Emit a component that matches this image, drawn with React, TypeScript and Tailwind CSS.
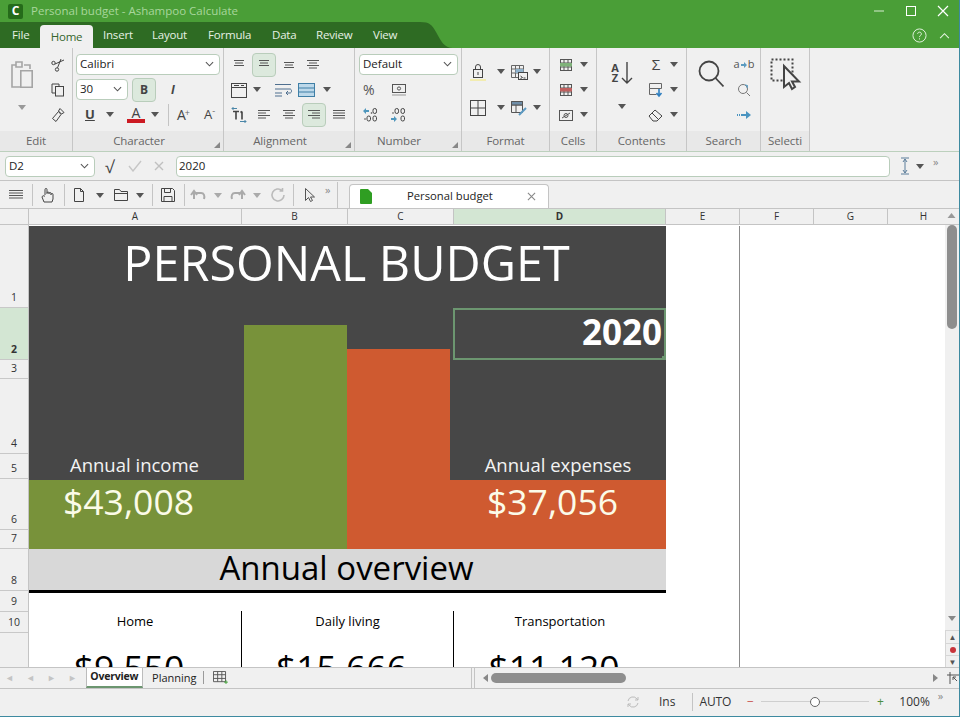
import React from "react";

const UI = "font-['Open_Sans',sans-serif]";

type IconProps = { className?: string; children: React.ReactNode; box?: number };

const Ico = ({ className = "w-4 h-4", children, box = 16 }: IconProps) => (
  <svg viewBox={`0 0 ${box} ${box}`} fill="none" stroke="currentColor" strokeWidth="1" className={`shrink-0 text-[#4a4a4a] ${className}`}>
    {children}
  </svg>
);

const Caret = ({ className = "" }: { className?: string }) => (
  <svg viewBox="0 0 8 5" className={`w-2 h-[5px] shrink-0 text-[#555] ${className}`} fill="currentColor">
    <path d="M0 0h8L4 5z" />
  </svg>
);

const Chevron = () => (
  <svg viewBox="0 0 10 6" className="w-[9px] h-[6px] shrink-0 text-[#555]" fill="none" stroke="currentColor" strokeWidth="1.2">
    <path d="M1 1l4 4 4-4" />
  </svg>
);

const Lines = ({ rows }: { rows: [number, number][] }) => (
  <Ico className="w-4 h-4 text-[#555]">
    {rows.map(([a, b], i) => (
      <path key={i} d={`M${a} ${3.5 + i * 2.5}H${b}`} />
    ))}
  </Ico>
);

const Combo = ({ label, className }: { label: string; className: string }) => (
  <div className={`flex items-center justify-between bg-white border border-[#b9cdbb] rounded-[4px] h-[21px] pl-[3px] pr-[5px] pb-px text-[11.5px] text-[#222] ${className}`}>
    <span>{label}</span>
    <Chevron />
  </div>
);

const Group = ({ label, className, corner, children }: { label: string; className: string; corner?: boolean; children: React.ReactNode }) => (
  <div className={`flex flex-col shrink-0 border-r border-[#c6c6c6] ${className}`}>
    <div className="flex h-[84px] pt-[4px]">{children}</div>
    <div className={`h-[20px] bg-[#e8e8e8] flex items-center justify-center text-[11.5px] tracking-[-0.1px] text-[#666] relative overflow-hidden whitespace-nowrap ${corner ? "pr-[18px]" : ""}`}>
      {label}
      {corner && (
        <svg viewBox="0 0 6 6" className="w-[6px] h-[6px] absolute right-[3px] bottom-[3px] text-[#888]" fill="currentColor">
          <path d="M6 0v6H0z" />
        </svg>
      )}
    </div>
  </div>
);

const Row = ({ className = "", children }: { className?: string; children: React.ReactNode }) => (
  <div className={`flex items-center h-[25px] ${className}`}>{children}</div>
);

const TableIcon = ({ band }: { band: string }) => (
  <svg viewBox="0 0 16 16" className="w-4 h-4 shrink-0" fill="none" stroke="#555">
    <rect x="2.5" y="2.5" width="11" height="11" />
    <path d="M2.5 6h11M2.5 10h11M6 2.5v11M10 2.5v11" />
    <rect x="2" y="6" width="12" height="3.5" fill={band} stroke="none" />
  </svg>
);

const Divider = () => <div className="w-px h-[22px] bg-[#c4c4c4] shrink-0" />;

const rows = [
  { n: "1", h: "h-[83px]" },
  { n: "2", h: "h-[52px]", active: true },
  { n: "3", h: "h-[19px]" },
  { n: "4", h: "h-[75px]" },
  { n: "5", h: "h-[25px]" },
  { n: "6", h: "h-[51px]" },
  { n: "7", h: "h-[19px]" },
  { n: "8", h: "h-[42px]" },
  { n: "9", h: "h-[21px]" },
  { n: "10", h: "h-[21px]" },
];

const cols = [
  { n: "A", w: "w-[213px]" },
  { n: "B", w: "w-[106px]" },
  { n: "C", w: "w-[106px]" },
  { n: "D", w: "w-[212px]", active: true },
  { n: "E", w: "w-[74px]" },
  { n: "F", w: "w-[74px]" },
  { n: "G", w: "w-[74px]" },
  { n: "H", w: "w-[57px] pl-[15px]" },
];

const categories = [
  { name: "Home", value: "$9,550", cls: "w-[213px] border-r border-black" },
  { name: "Daily living", value: "$15,666", cls: "w-[212px] border-r border-black" },
  { name: "Transportation", value: "$11,120", cls: "w-[212px]" },
];

const menu = [
  { label: "Insert", w: "w-[49px]" },
  { label: "Layout", w: "w-[56px]" },
  { label: "Formula", w: "w-[64px]" },
  { label: "Data", w: "w-[44px]" },
  { label: "Review", w: "w-[57px]" },
  { label: "View", w: "w-[40px]" },
];

export default function App() {
  return (
    <div className={`${UI} w-[960px] h-[717px] overflow-hidden flex flex-col bg-[#f0f0f0] border-r border-b border-[#3d8aa0]`}>
      {/* TITLE BAR */}
      <div className="h-[22px] bg-[#4a9e37] flex items-center pl-[8px] shrink-0">
        <div className="w-[15px] h-[15px] bg-[#256b1a] rounded-[2px] flex items-center justify-center text-white font-bold text-[12px] leading-none">C</div>
        <span className="ml-[8px] text-[11.5px] text-[#a8d69c]">Personal budget - Ashampoo Calculate</span>
        <div className="ml-auto flex items-center text-white">
          <svg viewBox="0 0 12 12" className="w-3 h-3 mr-[20px]" stroke="#d7ecd2" strokeWidth="1"><path d="M1 6h10" /></svg>
          <svg viewBox="0 0 12 12" className="w-3 h-3 mr-[20px]" stroke="#fff" fill="none"><rect x="1.5" y="1.5" width="9" height="9" /></svg>
          <svg viewBox="0 0 12 12" className="w-3 h-3 mr-[10px]" stroke="#fff" strokeWidth="1.2"><path d="M1 1l10 10M11 1L1 11" /></svg>
        </div>
      </div>

      {/* MENU TABS */}
      <div className="h-[26px] bg-[#4a9e37] flex shrink-0">
        <div className="w-[420px] bg-[#2e6b23] flex items-end text-[11.5px] tracking-[-0.2px] text-[#e6f1e3]">
          <span className="pl-[12px] w-[40px] mb-[5px]">File</span>
          <span className="w-[53px] h-[23px] bg-[#f0f0f0] rounded-t-[4px] text-[#35662c] flex items-center justify-center">Home</span>
          <span className="w-[10px]" />
          {menu.map((m) => (
            <span key={m.label} className={`${m.w} mb-[5px]`}>{m.label}</span>
          ))}
        </div>
        <svg viewBox="0 0 33 26" className="w-[33px] h-[26px]" fill="#2e6b23"><path d="M0 0C10 0 12 3 16 10c5 9 8 16 17 16H0z" /></svg>
        <div className="ml-auto flex items-center pr-[9px]">
          <svg viewBox="0 0 16 16" className="w-[15px] h-[15px] mr-[12px]" fill="none" stroke="#e8f5e4">
            <circle cx="8" cy="8" r="7" />
            <path d="M6 6.3C6 3.8 10 3.8 10 6.3 10 8 8 8 8 9.7M8 11v1.2" />
          </svg>
          <svg viewBox="0 0 12 8" className="w-[11px] h-[7px]" fill="none" stroke="#e8f5e4" strokeWidth="1.2"><path d="M1 7l5-5 5 5" /></svg>
        </div>
      </div>

      {/* RIBBON */}
      <div className="h-[104px] flex shrink-0 border-b border-[#bcd0bd]">
        <Group label="Edit" className="w-[73px]">
          <div className="w-[44px] flex flex-col items-center pt-[8px]">
            <svg viewBox="0 0 24 30" className="w-[24px] h-[30px]" fill="none" stroke="#a5a5a5" strokeWidth="1.6">
              <path d="M14 5h6v4M6 5H2v22h8" />
              <path d="M6 2h6v5H6z" />
              <path d="M10.8 10.8h11.4v16.4H10.8z" />
            </svg>
            <Caret className="mt-[15px] text-[#999]" />
          </div>
          <div className="w-[28px] flex flex-col items-center">
            <Row>
              <svg viewBox="0 0 16 16" className="w-4 h-4" fill="none" stroke="#444"><circle cx="3.5" cy="6" r="1.7" /><circle cx="7" cy="12.5" r="1.7" /><path d="M5 7l9-4M7.5 10.8L11 2" /></svg>
            </Row>
            <Row>
              <svg viewBox="0 0 14 14" className="w-[14px] h-[14px]" fill="none" stroke="#444"><path d="M8 3V1H1v9h3" /><rect x="4.5" y="3.5" width="8" height="9.5" /></svg>
            </Row>
            <Row>
              <svg viewBox="0 0 16 16" className="w-4 h-4" fill="none" stroke="#444"><path d="M10 1.5l4 4-2.5 1.5-3-3zM8.5 4.5l2.5 3-5 7-3.5-3z" /></svg>
            </Row>
          </div>
        </Group>

        <Group label="Character" corner className="w-[151px]">
          <div className="flex flex-col pl-[3px]">
            <Row><Combo label="Calibri" className="w-[144px]" /></Row>
            <Row className="gap-[4px]">
              <Combo label="30" className="w-[52px]" />
              <div className="w-[24px] h-[24px] bg-[#dce9dd] border border-[#b9cdbb] rounded-[4px] flex items-center justify-center font-bold text-[12px] text-[#444]">B</div>
              <span className="ml-[11px] italic font-bold text-[12px] text-[#444]">I</span>
            </Row>
            <Row className="pl-[9px]">
              <span className="font-bold text-[13px] underline text-[#444] w-[15px]">U</span>
              <Caret className="ml-[6px]" />
              <div className="ml-[13px] w-[18px] flex flex-col items-center leading-none">
                <span className="text-[14px] text-[#444] leading-[13px]">A</span>
                <div className="w-[18px] h-[4px] bg-[#cc1a22]" />
              </div>
              <Caret className="ml-[6px]" />
              <div className="ml-[9px] mr-[8px]"><Divider /></div>
              <span className="text-[14px] text-[#444]">A<sup className="text-[9px] text-[#666] -ml-[1px]">+</sup></span>
              <span className="ml-[14px] text-[13px] text-[#444]">A<sup className="text-[9px] text-[#666]">-</sup></span>
            </Row>
          </div>
        </Group>

        <Group label="Alignment" corner className="w-[131px]">
          <div className="flex flex-col pl-[7px]">
            <Row className="gap-[9px]">
              <Lines rows={[[3, 13], [4, 12], [3, 13]]} />
              <div className="w-[24px] h-[24px] -mx-[4px] bg-[#dce9dd] border border-[#b9cdbb] rounded-[4px] flex items-center justify-center"><Lines rows={[[3, 13], [4, 12], [3, 13]]} /></div>
              <div className="pt-[5px]"><Lines rows={[[3, 13], [4, 12], [3, 13]]} /></div>
              <div className="-ml-[1px]"><Lines rows={[[2, 14], [4, 12], [2, 14], [4, 12]]} /></div>
            </Row>
            <Row>
              <svg viewBox="0 0 16 16" className="w-4 h-4" fill="none" stroke="#444"><rect x="0.5" y="1.5" width="15" height="14" /><path d="M0.5 5.5h15M3 3.5h5M10 3.5h3" /></svg>
              <Caret className="ml-[6px]" />
              <svg viewBox="0 0 18 16" className="w-[18px] h-4 ml-[13px]" fill="none" stroke="#4f6f8f"><path d="M1 2.5h16M1 7h15c2 0 2 4 0 4h-4m2-2l-2 2 2 2M1 11h7M1 14h7" /></svg>
              <svg viewBox="0 0 18 16" className="w-[18px] h-4 ml-[6px]" fill="#bcd8ea" stroke="#3f7fa6"><rect x="0.5" y="1.5" width="16" height="13" /><path d="M0.5 6h16M0.5 10h16" /></svg>
              <Caret className="ml-[7px]" />
            </Row>
            <Row className="gap-[9px]">
              <svg viewBox="0 0 16 18" className="w-4 h-[18px] shrink-0" fill="none" stroke="#4a86a8"><path d="M1 2.5h5M2.500 1L1 2.500 2.500 4M9 15.500h6M13.500 14l1.500 1.500L13.500 17" /><path d="M2 5.500h6M5 5.500v8M11 5.500v8M9.500 6.500L11 5.500" stroke="#444" strokeWidth="1.6" /></svg>
              <Lines rows={[[2, 14], [2, 10], [2, 14], [2, 10]]} />
              <Lines rows={[[2, 14], [4, 12], [2, 14], [4, 12]]} />
              <div className="w-[24px] h-[24px] -mx-[4px] bg-[#dce9dd] border border-[#b9cdbb] rounded-[4px] flex items-center justify-center"><Lines rows={[[2, 14], [6, 14], [2, 14], [6, 14]]} /></div>
              <Lines rows={[[2, 14], [2, 14], [2, 14], [2, 14]]} />
            </Row>
          </div>
        </Group>

        <Group label="Number" corner className="w-[107px]">
          <div className="flex flex-col pl-[4px]">
            <Row><Combo label="Default" className="w-[99px]" /></Row>
            <Row className="pl-[4px] gap-[13px]">
              <span className="text-[14px] text-[#555] w-[15px]">%</span>
              <svg viewBox="0 0 16 14" className="w-4 h-[14px]" fill="none" stroke="#555"><rect x="1.5" y="1.5" width="13" height="8" /><circle cx="8" cy="5.5" r="1.6" /><path d="M1 12h14" stroke="#999" /></svg>
            </Row>
            <Row className="pl-[4px] gap-[13px]">
              <svg viewBox="0 0 15 15" className="w-[15px] h-[15px]" fill="#4f97bd"><path d="M0 4l3-3v2h3v2H3v2z" /><circle cx="8.500" cy="6" r="0.800" fill="#444" /><circle cx="2" cy="12" r="0.800" fill="#444" /><rect x="10" y="1.500" width="3.500" height="5" rx="1.700" fill="none" stroke="#444" /><rect x="4" y="9" width="3.500" height="5" rx="1.700" fill="none" stroke="#444" /><rect x="10" y="9" width="3.500" height="5" rx="1.700" fill="none" stroke="#444" /></svg>
              <svg viewBox="0 0 15 15" className="w-[15px] h-[15px]" fill="#4f97bd"><circle cx="2" cy="6" r="0.800" fill="#444" /><rect x="4" y="1.500" width="3.500" height="5" rx="1.700" fill="none" stroke="#444" /><rect x="10" y="1.500" width="3.500" height="5" rx="1.700" fill="none" stroke="#444" /><path d="M0 11h3V9l3 3-3 3v-2H0z" /><rect x="10" y="9" width="3.500" height="5" rx="1.700" fill="none" stroke="#444" /></svg>
            </Row>
          </div>
        </Group>

        <Group label="Format" className="w-[88px]">
          <div className="flex flex-col pl-[8px] pt-[7px] gap-[11px]">
            <Row>
              <div className="w-4 border-b-2 border-[#f2ecb0] flex justify-center">
                <svg viewBox="0 0 14 16" className="w-[14px] h-4" fill="none" stroke="#444"><rect x="2.5" y="6.5" width="9" height="8" /><path d="M4.5 6.5V4a2.5 2.5 0 015 0v2.5M7 9v3" /></svg>
              </div>
              <Caret className="ml-[11px]" />
              <svg viewBox="0 0 18 16" className="w-[18px] h-4 ml-[5px] shrink-0" fill="none" stroke="#666"><path d="M1.500 1.500h12v12h-12zM1.500 5h12M1.500 9h12M5.500 1.500v12M9.500 1.500v12" /><rect x="5.500" y="5" width="8" height="4" fill="#8fb2cc" stroke="none" /><rect x="8.500" y="8.500" width="9" height="7" fill="#f0f0f0" stroke="#444" /><path d="M10.500 12l2 1.500-2 1M13.500 14h2" stroke="#444" /></svg>
              <Caret className="ml-[5px]" />
            </Row>
            <Row>
              <svg viewBox="0 0 16 16" className="w-4 h-4" fill="none" stroke="#444"><rect x="0.5" y="0.5" width="15" height="15" /><path d="M8 0.5v15M0.5 8h15" /></svg>
              <Caret className="ml-[11px]" />
              <svg viewBox="0 0 18 16" className="w-[18px] h-4 ml-[5px]" fill="none" stroke="#555"><path d="M1.5 1.5h11v11h-11zM1.5 5h11M6 1.5v11" /><path d="M1.5 1.5h11V5h-11z" fill="#6f8ea8" /><path d="M9 15l7-7" stroke="#5d9ac2" strokeWidth="2" /></svg>
              <Caret className="ml-[5px]" />
            </Row>
          </div>
        </Group>

        <Group label="Cells" className="w-[47px]">
          <div className="flex flex-col pl-[8px]">
            <Row><TableIcon band="#7fb27a" /><Caret className="ml-[6px]" /></Row>
            <Row><TableIcon band="#c0605f" /><Caret className="ml-[6px]" /></Row>
            <Row>
              <svg viewBox="0 0 16 16" className="w-4 h-4" fill="none" stroke="#555"><rect x="1.5" y="3.5" width="13" height="10" /><path d="M4 11l8-5" /><circle cx="8" cy="8.5" r="2" /></svg>
              <Caret className="ml-[6px]" />
            </Row>
          </div>
        </Group>

        <Group label="Contents" className="w-[90px]">
          <div className="w-[50px] flex flex-col items-center pt-[9px]">
            <div className="flex items-center">
              <span className="text-[11px] leading-[10px] font-bold text-[#444] text-center">A<br />Z</span>
              <svg viewBox="0 0 12 24" className="w-[12px] h-[24px] ml-[2px]" fill="none" stroke="#444" strokeWidth="1.4"><path d="M6 1v21M1 17l5 5 5-5" /></svg>
            </div>
            <Caret className="mt-[19px]" />
          </div>
          <div className="flex flex-col pl-[1px]">
            <Row><span className="w-4 text-center text-[15px] text-[#444]">Σ</span><Caret className="ml-[6px]" /></Row>
            <Row>
              <svg viewBox="0 0 16 16" className="w-4 h-4" fill="none" stroke="#666"><path d="M1.5 1.5h12v5h-12zM1.5 6.5v6h7" /><path d="M11 7v6M8.5 11l2.5 3 2.5-3" stroke="#2f7fc0" strokeWidth="1.6" /></svg>
              <Caret className="ml-[6px]" />
            </Row>
            <Row>
              <svg viewBox="0 0 16 14" className="w-4 h-[14px]" fill="none" stroke="#444"><path d="M1 8l6-6 7 6-5 5H5z" /><path d="M4 5l6 6" /></svg>
              <Caret className="ml-[6px]" />
            </Row>
          </div>
        </Group>

        <Group label="Search" className="w-[74px]">
          <div className="w-[46px] pl-[11px] pt-[8px]">
            <svg viewBox="0 0 26 28" className="w-[26px] h-[28px]" fill="none" stroke="#444" strokeWidth="1.8"><circle cx="11" cy="11" r="9.5" /><path d="M17.5 18l8 8.5" /></svg>
          </div>
          <div className="flex flex-col items-center w-[22px]">
            <Row>
              <span className="flex items-center text-[11px] text-[#555] whitespace-nowrap">a
                <svg viewBox="0 0 6 6" className="w-[6px] h-[6px] mx-px" fill="#5b9bc0"><path d="M0 2h3V0l3 3-3 3V4H0z" /></svg>
                b</span>
            </Row>
            <Row>
              <svg viewBox="0 0 14 14" className="w-[14px] h-[14px]" fill="none" stroke="#777"><circle cx="6" cy="6" r="4.5" /><path d="M9.5 9.5L13 13" /><path d="M8 2l2.500 0.500L10 5" stroke="#4a94c0" /></svg>
            </Row>
            <Row>
              <svg viewBox="0 0 14 8" className="w-[14px] h-2" fill="#4a94c0"><path d="M0 3h1v2H0zM2 3h1v2H2zM4 3h5V0l5 4-5 4V5H4z" /></svg>
            </Row>
          </div>
        </Group>

        <Group label="Selecti" className="w-[49px]">
          <div className="pl-[9px] pt-[6px]">
            <svg viewBox="0 0 32 34" className="w-[32px] h-[34px]" fill="none">
              <rect x="1.5" y="1.5" width="21" height="21" stroke="#444" strokeWidth="2" strokeDasharray="2 2" />
              <path d="M14 8v21l5-4 3 6 3-2-3-5.500h7z" fill="#f0f0f0" stroke="#444" strokeWidth="2" />
            </svg>
          </div>
        </Group>
      </div>

      {/* FORMULA BAR */}
      <div className="h-[29px] flex items-center pl-[5px] shrink-0 border-b border-[#c4c4c4]">
        <Combo label="D2" className="w-[90px]" />
        <span className="ml-[10px] w-[16px] text-[17px] text-[#444] leading-none">√</span>
        <svg viewBox="0 0 14 12" className="ml-[7px] w-[14px] h-3" fill="none" stroke="#c6c6c6" strokeWidth="1.4"><path d="M1 6l4 5 8-10" /></svg>
        <svg viewBox="0 0 10 10" className="ml-[12px] w-[10px] h-[10px]" fill="none" stroke="#c0c0c0" strokeWidth="1.4"><path d="M1 1l8 8M9 1L1 9" /></svg>
        <div className="ml-[12px] w-[714px] h-[21px] bg-white border border-[#b9cdbb] rounded-[4px] pl-[2px] pb-px text-[11.5px] text-[#222] flex items-center">2020</div>
        <svg viewBox="0 0 10 18" className="ml-[10px] w-[10px] h-[18px]" fill="none" stroke="#5b7d9a"><path d="M1 1h8M1 17h8M5 2v14M3 5l2-3 2 3M3 13l2 3 2-3" /></svg>
        <Caret className="ml-[6px]" />
        <span className="ml-[9px] -mt-[8px] text-[11px] text-[#888]">»</span>
      </div>

      {/* TOOLBAR */}
      <div className="h-[27px] flex items-end pl-[8px] shrink-0">
        <div className="h-[26px] flex items-center">
          <Lines rows={[[1, 15], [1, 15], [1, 15], [1, 15]]} />
          <div className="ml-[8px] mr-[7px]"><Divider /></div>
          <svg viewBox="0 0 16 16" className="w-4 h-4" fill="none" stroke="#444"><path d="M5 8V2.500a1 1 0 012 0V7m0-1a1 1 0 012 0v1m0-.500a1 1 0 012 0V8m0-.500a1 1 0 012 0V12l-1 3H4l-2-5c0-1 2-2 3-.500" /></svg>
          <div className="ml-[8px] mr-[7px]"><Divider /></div>
          <svg viewBox="0 0 12 16" className="w-[12px] h-4 ml-[1px]" fill="none" stroke="#444"><path d="M1.500 1.500h6l3 3v10h-9zM7.500 1.500v3h3" /></svg>
          <Caret className="ml-[11px]" />
          <svg viewBox="0 0 16 14" className="w-4 h-[14px] ml-[9px]" fill="none" stroke="#444"><path d="M1.500 12.500v-11h5l1.500 2h6.500v9zM1.500 5.500h13" /></svg>
          <Caret className="ml-[7px]" />
          <div className="ml-[8px] mr-[7px]"><Divider /></div>
          <svg viewBox="0 0 16 16" className="w-4 h-4" fill="none" stroke="#444"><path d="M1.500 1.500h11l2 2v11h-13zM4.500 1.500v4h6v-4M4 14.500v-5h8v5" /></svg>
          <div className="ml-[8px] mr-[5px]"><Divider /></div>
          <svg viewBox="0 0 16 14" className="w-4 h-[14px]" fill="none" stroke="#aaa" strokeWidth="2"><path d="M4 11V5h7c3 0 4 3 3 6M1 7l3-4 3 4" /></svg>
          <Caret className="ml-[8px] text-[#aaa]" />
          <svg viewBox="0 0 16 14" className="w-4 h-[14px] ml-[8px]" fill="none" stroke="#aaa" strokeWidth="2"><path d="M12 11V5H5c-3 0-4 3-3 6M15 7l-3-4-3 4" /></svg>
          <Caret className="ml-[7px] text-[#aaa]" />
          <svg viewBox="0 0 16 16" className="w-4 h-4 ml-[9px]" fill="none" stroke="#bbb" strokeWidth="1.6"><path d="M14 8a6 6 0 11-2-4.500M12.500 1v3h-3" /></svg>
          <div className="ml-[7px] mr-[10px]"><Divider /></div>
          <svg viewBox="0 0 12 16" className="w-[12px] h-4" fill="#eee" stroke="#555"><path d="M1.500 1.500v12l3-3 2 4 2-1-2-3.500h4z" /></svg>
          <span className="ml-[9px] -mt-[10px] text-[11px] text-[#888]">»</span>
          <div className="ml-[7px] mr-[11px] h-[26px] w-px bg-[#c4c4c4]" />
        </div>
        <div className="w-[200px] h-[24px] bg-white border border-b-0 border-[#c4c4c4] rounded-t-[4px] flex items-center pl-[10px] pr-[12px]">
          <svg viewBox="0 0 12 15" className="w-[12px] h-[15px]" fill="#2f9e22"><path d="M0 1a1 1 0 011-1h7l4 4v10a1 1 0 01-1 1H1a1 1 0 01-1-1z" /></svg>
          <span className="flex-1 text-center text-[11.25px] text-[#222]">Personal budget</span>
          <svg viewBox="0 0 10 10" className="w-[9px] h-[9px]" fill="none" stroke="#888" strokeWidth="1.2"><path d="M1 1l8 8M9 1L1 9" /></svg>
        </div>
      </div>

      {/* COLUMN HEADERS */}
      <div className="h-[17px] flex shrink-0 border-t border-b border-[#c4c4c4] text-[10px] text-[#333]">
        <div className="w-[28px] shrink-0" />
        {cols.map((c) => (
          <div key={c.n} className={`${c.w} shrink-0 border-l border-[#c4c4c4] flex items-center justify-center ${c.active ? "bg-[#d3e6d3] font-bold" : ""}`}>
            {c.n}
          </div>
        ))}
        <div className="flex-1 flex justify-center pt-[4px]">
          <svg viewBox="0 0 8 5" className="w-[9px] h-[5px] text-[#999]" fill="currentColor"><path d="M0 5h8L4 0z" /></svg>
        </div>
      </div>

      {/* SHEET */}
      <div className="h-[442px] flex shrink-0 overflow-hidden">
        <div className="w-[29px] shrink-0 border-r border-[#c4c4c4] text-[10.5px] text-[#333]">
          {rows.map((r) => (
            <div key={r.n} className={`${r.h} border-b border-[#c8c8c8] flex items-end justify-center pb-[3px] leading-[13px] ${r.active ? "bg-[#d3e6d3] font-bold" : ""}`}>
              {r.n}
            </div>
          ))}
        </div>

        <div className="flex-1 bg-white flex overflow-hidden">
          <div className="w-[637px] shrink-0">
            {/* header block with the two bars */}
            <div className="h-[254px] mt-px bg-[#474747] grid grid-cols-[215px_103px_103px_216px] grid-rows-[82px_52px_95px_25px] text-white">
              <div className="col-start-1 col-span-4 row-start-1 text-center whitespace-nowrap text-[48.5px] leading-[72px] pr-[2px] font-normal">PERSONAL BUDGET</div>
              <div className="col-start-2 row-start-1 row-span-4 self-end h-[155px] bg-[#78923a]" />
              <div className="col-start-3 row-start-1 row-span-4 self-end h-[131px] bg-[#cf5a30]" />
              <div className="col-start-4 row-start-2 ml-[3px] border-2 border-[#6c9670] text-right pr-[2px] text-[35px] font-bold leading-[44px] relative">
                2020
                <div className="absolute -right-[2px] -bottom-[2px] w-[4px] h-[4px] bg-[#6c9670]" />
              </div>
              <div className="col-start-1 row-start-4 text-center pr-[4px] text-[18.5px] leading-[20px] text-[#f3f3f3]">Annual income</div>
              <div className="col-start-4 row-start-4 text-center text-[18.5px] leading-[20px] text-[#f3f3f3]">Annual expenses</div>
            </div>
            <div className="h-[69px] flex text-[35.5px] leading-[42px] text-[#fbfbe8]">
              <div className="w-[318px] bg-[#78923a] pl-[34px]">$43,008</div>
              <div className="flex-1 bg-[#cf5a30] pl-[140px]">$37,056</div>
            </div>
            <div className="h-[44px] bg-[#d8d8d8] border-b-[3px] border-black text-center text-[33px] leading-[37px] text-black pr-[2px]">Annual overview</div>
            <div className="h-[18px]" />
            <div className="flex text-black text-center">
              {categories.map((c) => (
                <div key={c.name} className={`${c.cls} shrink-0 h-[90px]`}>
                  <div className="text-[13px] leading-[20px]">{c.name}</div>
                  <div className="text-[35.5px] leading-[44px] mt-[14px] pr-[12px]">{c.value}</div>
                </div>
              ))}
            </div>
          </div>
          <div className="w-[73px] shrink-0" />
          <div className="w-px bg-[#8c8c8c] shrink-0 mt-px" />
          <div className="flex-1" />
        </div>

        {/* vertical scrollbar */}
        <div className="w-[14px] shrink-0 flex flex-col items-center">
          <div className="w-[10px] h-[104px] bg-[#8e8e8e] rounded-[5px]" />
          <div className="flex-1" />
          <Caret className="text-[#888] mb-[9px]" />
          <div className="w-[14px] flex flex-col items-center border-t border-l border-[#d6d6d6]">
            <div className="h-[12px] flex items-center text-[8px] text-[#555] leading-none">▲</div>
            <div className="h-[12px] flex items-center border-t border-[#d6d6d6] w-full justify-center"><div className="w-[6px] h-[6px] rounded-full bg-[#c8333a]" /></div>
            <div className="h-[12px] flex items-center border-t border-[#d6d6d6] w-full justify-center text-[8px] text-[#555] leading-none">▼</div>
          </div>
        </div>
      </div>

      {/* SHEET TABS */}
      <div className="h-[22px] flex shrink-0 border-t border-b border-[#c4c4c4] text-[11px]">
        <div className="w-[86px] flex items-center pl-[5px] gap-[12px] text-[#c4c4c4] text-[9px] shrink-0">
          <span className="w-[9px]">◄</span><span className="w-[9px]">◄</span><span className="w-[9px]">►</span><span className="w-[9px]">►</span>
        </div>
        <div className="w-[57px] h-[20px] bg-white border-x border-b-2 border-x-[#bcbcbc] border-b-[#6c9670] flex items-center justify-center font-bold text-[10.5px] tracking-[-0.2px] text-[#222]">Overview</div>
        <div className="ml-[9px] w-[46px] flex items-center justify-center font-medium text-[#222]">Planning</div>
        <div className="ml-[6px] w-px h-[13px] mt-[3px] bg-[#9a9a9a]" />
        <svg viewBox="0 0 16 14" className="ml-[9px] mt-[3px] w-[15px] h-[13px]" fill="none" stroke="#555"><path d="M0.500 0.500h13v11h-13zM0.500 4h13M0.500 8h13M5 0.500v11M9.500 0.500v11" /><path d="M14 10v4M12 12h4" stroke="#3f9e35" /></svg>
        <div className="ml-[243px] w-px bg-[#c4c4c4]" />
        <div className="w-px ml-[2px] bg-[#c4c4c4]" />
        <div className="flex-1 flex items-center pl-[8px]">
          <svg viewBox="0 0 5 8" className="w-[5px] h-2 text-[#888]" fill="currentColor"><path d="M5 0v8L0 4z" /></svg>
          <div className="ml-[3px] w-[135px] h-[10px] bg-[#8e8e8e] rounded-[5px]" />
          <svg viewBox="0 0 5 8" className="ml-[307px] w-[5px] h-2 text-[#888]" fill="currentColor"><path d="M0 0v8l5-4z" /></svg>
          <svg viewBox="0 0 12 12" className="ml-[9px] w-3 h-3" fill="none" stroke="#555"><path d="M0 3h12M3 0v12M6 5l4 4M6 5h3M6 5v3" /></svg>
        </div>
      </div>

      {/* STATUS BAR */}
      <div className="flex-1 flex items-center pb-[2px] text-[12px] text-[#333]">
        <svg viewBox="0 0 14 14" className="ml-[626px] w-[14px] h-[14px]" fill="none" stroke="#bbb"><path d="M2 6a5 5 0 019-2l1 1M12 8a5 5 0 01-9 2L2 9M12 2v3H9M2 12V9h3" /></svg>
        <span className="ml-[19px]">Ins</span>
        <div className="ml-[17px] w-px h-[18px] bg-[#c4c4c4]" />
        <span className="ml-[6px] tracking-[-0.1px]">AUTO</span>
        <span className="ml-[15px] text-[#c8534f] w-[8px] text-center leading-none">−</span>
        <div className="ml-[7px] w-[108px] h-px bg-[#cfcfcf] flex items-center justify-center">
          <div className="w-[10px] h-[10px] rounded-full bg-white border border-[#666]" />
        </div>
        <span className="ml-[7px] text-[#4d8f43] w-[8px] text-center leading-none">+</span>
        <span className="ml-[15px]">100%</span>
        <span className="ml-[8px] -mt-[10px] text-[11px] text-[#888]">»</span>
      </div>
    </div>
  );
}
